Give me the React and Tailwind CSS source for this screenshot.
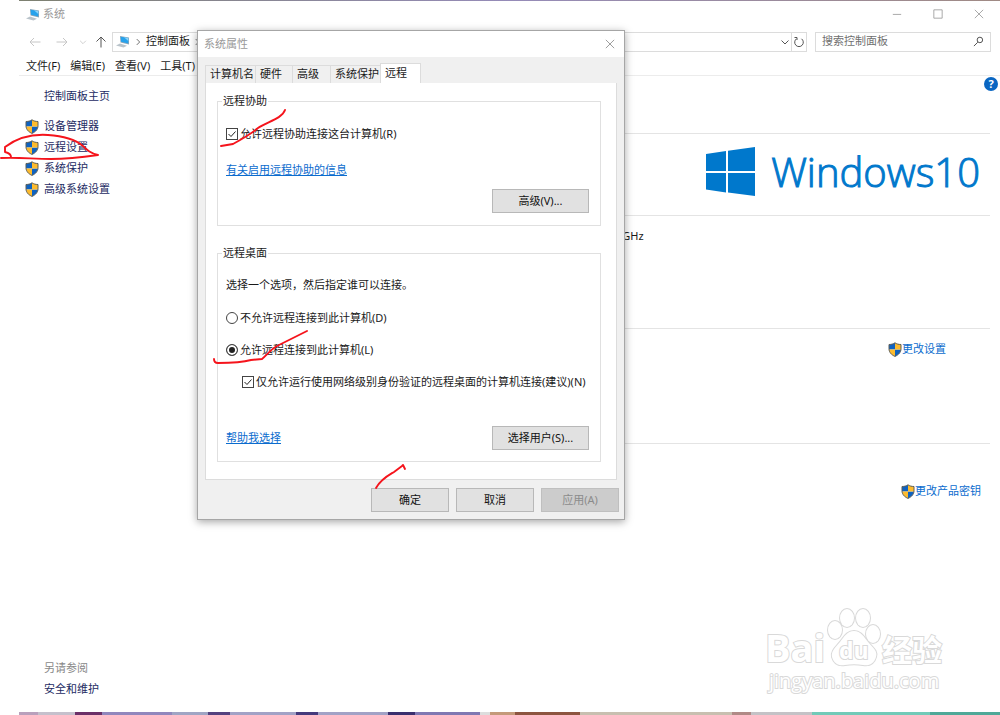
import { useState } from 'react';

function Shield() {
  return (
    <svg viewBox="0 0 14 15" className="h-[15px] w-[14px] shrink-0" aria-hidden="true">
      <clipPath id="shield"><path d="M7 .8C5.4 2 3.300 2.500 1 2.500v4.300c0 3.600 2.600 6.200 6 7.600 3.400-1.400 6-4 6-7.600V2.500C10.700 2.500 8.600 2 7 .8z"/></clipPath>
      <g clipPath="url(#shield)">
        <path fill="#0f62c0" d="M0 0h7v7.500H0zM7 7.500h7V15H7z"/>
        <path fill="#fdbb2e" d="M7 0h7v7.500H7zM0 7.500h7V15H0z"/>
      </g>
      <path d="M7 .8C5.400 2 3.300 2.500 1 2.500v4.300c0 3.600 2.600 6.200 6 7.600 3.400-1.400 6-4 6-7.600V2.500C10.700 2.500 8.600 2 7 .8z" fill="none" stroke="#5d5f58" strokeWidth="1"/>
    </svg>
  );
}

function Computer() {
  return (
    <svg viewBox="0 0 14 13" className="h-[13px] w-[14px] shrink-0" aria-hidden="true">
      <path d="M0 10.500l4-2 7 2.200-3.500 1.800z" fill="#b9c3ca"/>
      <path d="M4 1l9 1.500v7L4.500 7.500z" fill="#8fa7b8"/>
      <path d="M4.600 1.700l7.700 1.300v5.500L5 6.800z" fill="#27a2ec"/>
      <path d="M8 2.300l4.300.7v3z" fill="#8ad4fa"/>
    </svg>
  );
}

function Stroke({ d, className = '', size = 'h-3 w-3' }) {
  return (
    <svg viewBox="0 0 12 12" className={`${size} shrink-0 ${className}`} fill="none" stroke="currentColor" aria-hidden="true">
      <path d={d}/>
    </svg>
  );
}

const CHEVRON = 'M2.500 4.500L6 8l3.500-3.500';
const CHEVRON_RIGHT = 'M4.500 2.500L8 6 4.500 9.500';
const CLOSE = 'M1 1l10 10M11 1L1 11';

function SideLink({ children }) {
  return (
    <a href="#" className="flex h-[21px] items-center gap-[5px] pl-[6px] text-[#1d2b63]"><Shield/>{children}</a>
  );
}

function PushButton({ children, className = 'w-[78px]', disabled }) {
  return (
    <button disabled={disabled} className={`h-6 border border-[#b8b8b8] bg-[#e1e1e1] text-[#111] disabled:border-[#bfbfbf] disabled:bg-[#cccccc] disabled:text-[#8b8b8b] ${className}`}>{children}</button>
  );
}

function CheckBox({ children, className = '' }) {
  const [on, setOn] = useState(true);
  return (
    <label className={`flex h-4 items-center gap-[2px] ${className}`}>
      <span className="relative flex h-3 w-3 shrink-0">
        <input type="checkbox" checked={on} onChange={e => setOn(e.target.checked)} className="h-3 w-3 appearance-none border border-[#444] bg-white"/>
        {on && <Stroke d="M2.500 6l2.500 2.500L9.500 3.500" className="pointer-events-none absolute inset-0 text-[#222]"/>}
      </span>
      {children}
    </label>
  );
}

function Radio({ children, value, current, onPick }) {
  return (
    <label className="flex h-4 items-center gap-[2px]">
      <input type="radio" name="remote" checked={current === value} onChange={() => onPick(value)} className="h-3 w-3 shrink-0 appearance-none rounded-full border border-[#444] bg-white checked:bg-[#222] checked:shadow-[inset_0_0_0_2px_white]"/>
      {children}
    </label>
  );
}

function Group({ title, children, className }) {
  return (
    <fieldset className={`border border-[#e0e0e0] px-2 ${className}`}>
      <legend className="-ml-1 px-px leading-4">{title}</legend>
      {children}
    </fieldset>
  );
}

const TABS = [
  ['计算机名', 'w-[50px]'],
  ['硬件', 'w-[37px]'],
  ['高级', 'w-[38px]'],
  ['系统保护', 'w-[50px]'],
];

function PropertiesDialog() {
  const [remote, setRemote] = useState('allow');
  return (
    <section role="dialog" aria-label="系统属性" className="absolute top-[30px] left-[197px] w-[428px] border border-[#a6a6a6] bg-[#f0f0f0] pb-[7px] shadow-[0_2px_8px_rgba(0,0,0,0.35)]">
      <header className="flex h-[26px] items-center justify-between bg-white pr-[9px] pl-[6px] text-[#999]">
        <h2>系统属性</h2>
        <button aria-label="关闭"><Stroke d={CLOSE} size="h-[10px] w-[10px]" className="text-[#8a8a8a]"/></button>
      </header>
      <div role="tablist" className="flex items-end px-[7px] pt-[6px]">
        {TABS.map(([name, width]) => (
          <button key={name} role="tab" className={`h-[18px] border-t border-l border-[#dcdcdc] pl-1 text-left whitespace-nowrap ${width}`}>{name}</button>
        ))}
        <button role="tab" aria-selected="true" className="h-5 w-[41px] border border-b-0 border-[#dcdcdc] bg-white pl-1 text-left">远程</button>
      </div>
      <div className="mx-[7px] border border-t-0 border-[#dcdcdc] bg-white px-[11px] pt-[10px] pb-[17px]">
        <Group title="远程协助" className="mr-1 pb-3">
          <CheckBox className="mt-[17px]">允许远程协助连接这台计算机(R)</CheckBox>
          <a href="#" className="mt-5 block w-fit leading-4 text-[#0b6cce] underline">有关启用远程协助的信息</a>
          <div className="mt-[11px] flex justify-end pr-[3px]"><PushButton className="w-[97px]">高级(V)...</PushButton></div>
        </Group>
        <Group title="远程桌面" className="mt-[19px] mr-1 pb-[11px]">
          <p className="mt-4 leading-4">选择一个选项，然后指定谁可以连接。</p>
          <div className="mt-[17px] flex flex-col gap-4">
            <Radio value="deny" current={remote} onPick={setRemote}>不允许远程连接到此计算机(D)</Radio>
            <Radio value="allow" current={remote} onPick={setRemote}>允许远程连接到此计算机(L)</Radio>
            <CheckBox className="ml-4 whitespace-nowrap">仅允许运行使用网络级别身份验证的远程桌面的计算机连接(建议)(N)</CheckBox>
          </div>
          <div className="mt-9 flex items-center justify-between pr-[3px]">
            <a href="#" className="leading-4 text-[#0b6cce] underline">帮助我选择</a>
            <PushButton className="w-[97px]">选择用户(S)...</PushButton>
          </div>
        </Group>
      </div>
      <footer className="mt-2 flex justify-end gap-[7px] pr-[5px]">
        <PushButton>确定</PushButton>
        <PushButton>取消</PushButton>
        <PushButton disabled>应用(A)</PushButton>
      </footer>
    </section>
  );
}

function WindowsLogo() {
  return (
    <div className="flex items-center gap-4 text-[#0078cc]">
      <svg viewBox="0 0 49 49" className="h-[49px] w-[49px]" fill="currentColor" aria-hidden="true">
        <path d="M0 7l20-3v20H0zM22 3.800L49 0v24H22zM0 26h20v19.500L0 42.500zM22 26h27v23l-27-3.500z"/>
      </svg>
      <div className="flex font-['Open_Sans'] text-[40px] leading-[52px] font-light whitespace-nowrap [-webkit-text-stroke:1px_#0078cc]">
        <span>Windows</span>
        <span>10</span>
      </div>
    </div>
  );
}

function Watermark() {
  return (
    <svg viewBox="0 0 190 100" className="pointer-events-none absolute right-[49px] bottom-[15px] h-[100px] w-[190px]" fill="white" stroke="#d9d9d9" strokeWidth="2" paintOrder="stroke" aria-label="Baidu 经验">
      <text x="4" y="62" fontSize="38" className="font-['Open_Sans',sans-serif] font-bold">Bai</text>
      <g>
        <ellipse cx="74" cy="30" rx="7" ry="9"/>
        <ellipse cx="86" cy="18" rx="7" ry="9"/>
        <ellipse cx="102" cy="18" rx="7" ry="9"/>
        <ellipse cx="112" cy="34" rx="7" ry="9"/>
        <path d="M93 31c7 0 10 6 14 11 5 6 10 9 8 15-2 7-7 9-13 8-6-1-12-1-18 0-6 1-11-1-13-8-1-6 3-9 8-15 4-5 7-11 14-11z"/>
      </g>
      <text x="78" y="59" fontSize="23" className="font-['Open_Sans',sans-serif] font-bold">du</text>
      <text x="121" y="61" fontSize="30" className="font-['Noto_Sans_CJK_SC',sans-serif] font-bold">经验</text>
      <text x="8" y="88" fontSize="20" className="font-['Open_Sans',sans-serif] font-medium">jingyan.baidu.com</text>
    </svg>
  );
}

// red pen marks drawn over the window
function PenMarks() {
  return (
    <svg viewBox="0 0 450 500" className="pointer-events-none absolute top-0 left-0 h-[500px] w-[450px]" fill="none" stroke="#f5141c" strokeWidth="1.900" strokeLinecap="round" strokeLinejoin="round" aria-hidden="true">
      <path d="M11 157c0-3-2-4-6-5v-5c12-9 28-13 43-12 17 1 29 6 35 11 4 4 7 7 15 9-14 2-32 4-47 4-18 0-33-2-50-1"/>
      <path d="M221 146l12-2c11-6 18-10 25-16 8-6 24-9 27-18"/>
      <path d="M214 359c0 3 1 4 4 4 14 0 26-1 33-3l11-1c4-3 8-9 15-13l30-15"/>
      <path d="M376 488c5-9 13-13 18-16l8-6 1-1 2 4"/>
    </svg>
  );
}

// slices of the desktop showing below the window: [colour, share]
const DESKTOP = [
  ['#b9a0bc', 19], ['#c5c0cc', 37], ['#6b3068', 27], ['#9187bd', 70], ['#a0a5c4', 36], ['#54427f', 22],
  ['#a2a2c6', 66], ['#453a7c', 22], ['#a2a2c6', 70], ['#3a2f6e', 27], ['#8078b2', 65], ['#dddddd', 10],
  ['#c49a7a', 25], ['#8d5540', 65], ['#c8bfb0', 152], ['#b08a86', 19], ['#c4c2c6', 61], ['#72cab8', 118], ['#4fa898', 70],
];

export default function App() {
  return (
    <div className="relative flex min-h-screen flex-col bg-white pl-[19px] font-['Noto_Sans','Noto_Sans_CJK_SC',sans-serif] text-[11px] text-[#1a1a1a]">
      <div className="h-px bg-linear-to-r from-[#7d8070] via-[#958bb8] to-[#a08a84]"/>
      <header className="flex h-[26px] items-center justify-between pr-4 pl-[7px] text-[#999]">
        <h1 className="flex items-center gap-[3px]"><Computer/>系统</h1>
        <div className="flex items-center gap-[31px]">
          <button aria-label="最小化"><Stroke d="M1 6.500h10" size="h-[10px] w-[10px]"/></button>
          <button aria-label="最大化"><Stroke d="M1 1h10v10H1z" size="h-[10px] w-[10px]"/></button>
          <button aria-label="关闭"><Stroke d={CLOSE} size="h-[10px] w-[10px]"/></button>
        </div>
      </header>

      <nav className="flex h-[29px] items-center pr-[9px] pl-[10px]">
        <button aria-label="后退" className="text-[#c6c6c6]"><Stroke d="M11.500 6H1M5 2L1 6l4 4"/></button>
        <button aria-label="前进" className="ml-[15px] text-[#c6c6c6]"><Stroke d="M.5 6H11M7 2l4 4-4 4"/></button>
        <button aria-label="最近" className="ml-[10px] text-[#c6c6c6]"><Stroke d={CHEVRON} size="h-[10px] w-[10px]"/></button>
        <button aria-label="向上" className="ml-[7px] text-[#555]"><Stroke d="M6 11.500V1M1.500 5.500L6 1l4.500 4.500"/></button>
        <div className="ml-[5px] flex h-5 flex-1 items-center border border-[#dcdcdc] pl-[3px]">
          <Computer/>
          <Stroke d={CHEVRON_RIGHT} size="h-[10px] w-[10px]" className="mx-[3px] text-[#555]"/>
          <span>控制面板</span>
          <Stroke d={CHEVRON_RIGHT} size="h-[10px] w-[10px]" className="ml-[2px] text-[#555]"/>
          <button aria-label="历史" className="ml-auto"><Stroke d={CHEVRON} className="text-[#555]"/></button>
          <button aria-label="刷新" className="flex h-full items-center border-l border-[#dcdcdc] px-[1px]">
            <Stroke d="M3.500 2.800a4.300 4.300 0 1 0 5 0M1.500 1.500h2.500v2.500" className="text-[#555]"/>
          </button>
        </div>
        <div className="ml-2 flex h-5 w-[176px] items-center border border-[#dcdcdc] pr-[6px] pl-[6px]">
          <input aria-label="搜索" placeholder="搜索控制面板" className="min-w-0 flex-1 outline-none placeholder:text-[#707070]"/>
          <Stroke d="M1 11l4.200-4.200M10.500 4.300a3 3 0 1 1-6 0 3 3 0 0 1 6 0z" size="h-[11px] w-[11px]" className="text-[#444]"/>
        </div>
      </nav>

      <div className="flex h-5 items-center gap-[10px] border-b border-[#ececec] pt-[2px] pl-[7px]">
        {['文件(F)', '编辑(E)', '查看(V)', '工具(T)'].map(m => <button key={m} className="whitespace-nowrap">{m}</button>)}
      </div>

      <div className="flex flex-1">
        <aside className="flex w-[179px] shrink-0 flex-col pt-[9px] pb-[13px]">
          <a href="#" className="mb-[10px] pl-[25px] leading-[21px] text-[#1d2b63]">控制面板主页</a>
          <SideLink>设备管理器</SideLink>
          <SideLink>远程设置</SideLink>
          <SideLink>系统保护</SideLink>
          <SideLink>高级系统设置</SideLink>
          <div className="mt-auto flex flex-col pl-[25px] leading-[21px]">
            <span className="text-[#888]">另请参阅</span>
            <a href="#" className="text-[#1d2b63]">安全和维护</a>
          </div>
        </aside>
        <main className="flex-1 pr-[10px] pl-5">
          <div className="-mr-[8px] flex h-[57px] justify-end pt-px">
            <button aria-label="帮助" className="h-[14px] w-[14px] rounded-full bg-[#0a66c2] leading-[14px] font-bold text-white">?</button>
          </div>
          <div className="flex h-[83px] items-center justify-end border-y border-[#e4e4e4] pr-[10px] pb-[6px]"><WindowsLogo/></div>
          <div className="flex h-[113px] justify-center border-b border-[#e4e4e4] pt-3">
            <span className="pl-[58px]">GHz</span>
          </div>
          <div className="flex h-[115px] justify-end border-b border-[#e4e4e4] pt-[11px] pr-[44px]">
            <a href="#" className="flex h-[18px] items-center text-[#0b6cce]"><Shield/>更改设置</a>
          </div>
          <div className="flex justify-end pt-[38px] pr-[9px]">
            <a href="#" className="flex h-[18px] items-center text-[#0b6cce]"><Shield/>更改产品密钥</a>
          </div>
        </main>
      </div>
      <div className="flex h-[3px]">
        {DESKTOP.map(([color, share], i) => <div key={i} style={{ background: color, flexGrow: share }}/>)}
      </div>

      <Watermark/>
      <PropertiesDialog/>
      <PenMarks/>
    </div>
  );
}
